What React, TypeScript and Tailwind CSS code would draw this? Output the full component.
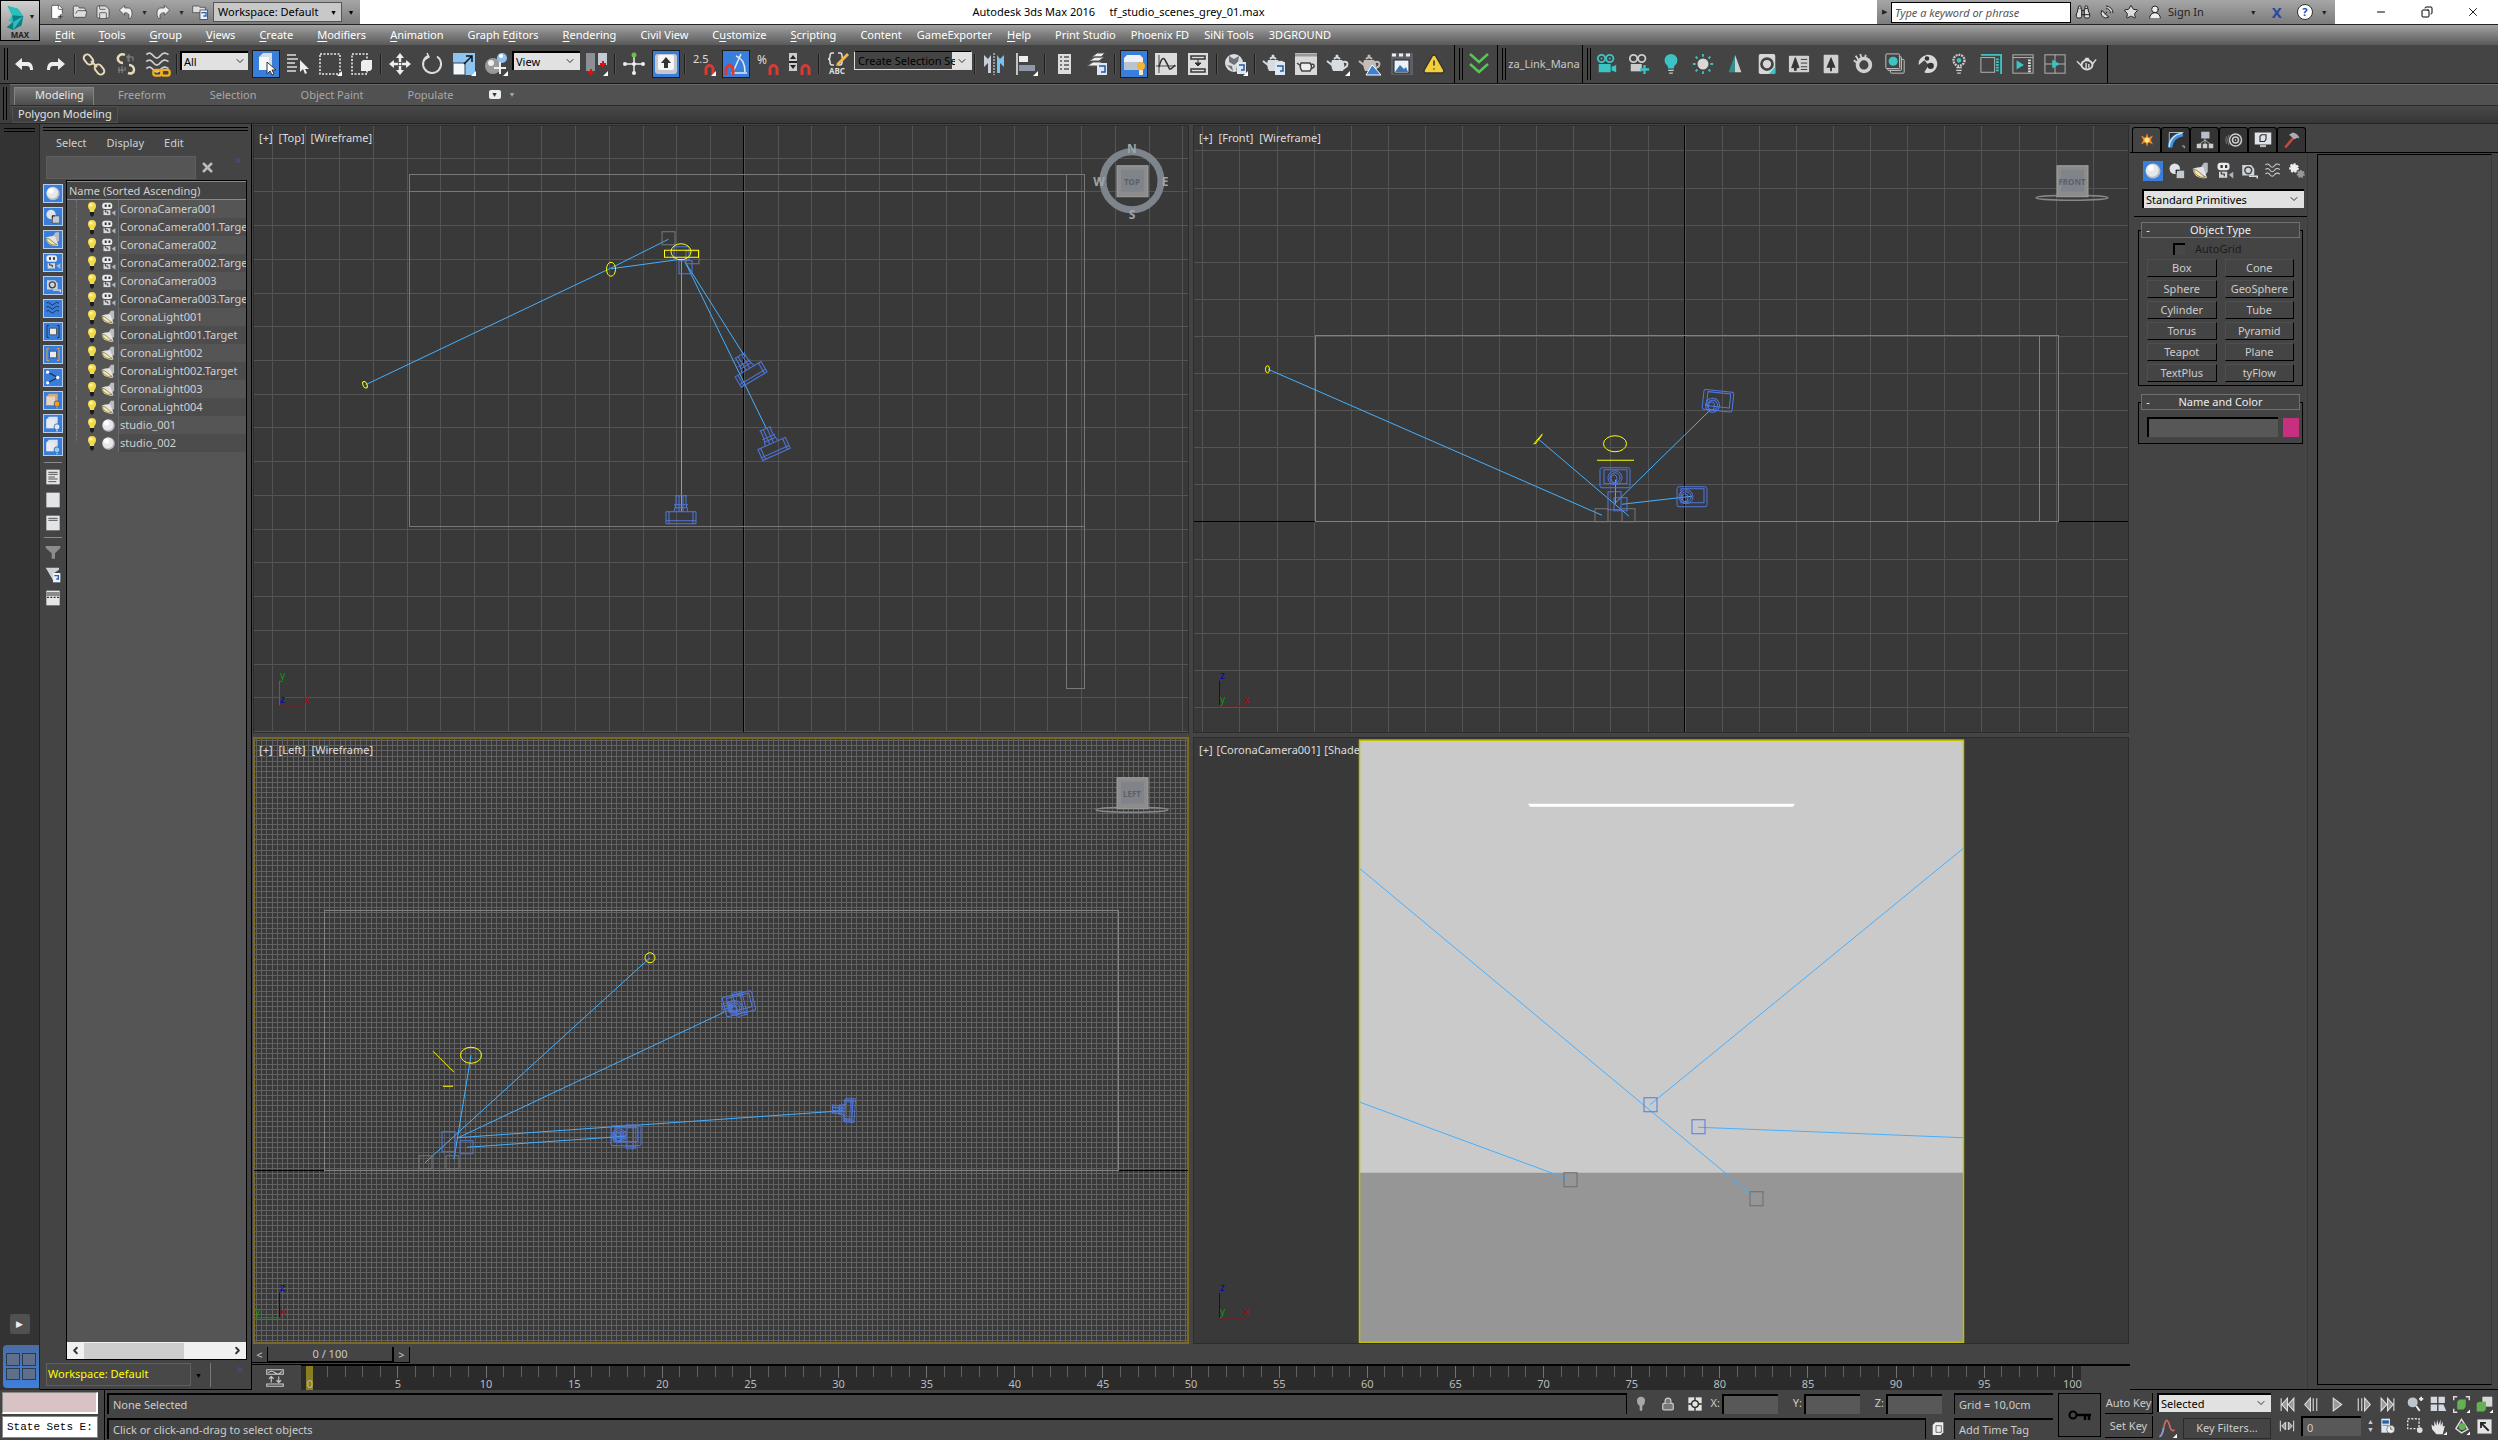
import type { ReactNode } from "react";
import {
  Binoculars,
  ChevronDown,
  ChevronLeft,
  ChevronRight,
  Copy,
  FilePlus2,
  FolderOpen,
  Lock,
  Minus,
  Save,
  SatelliteDish,
  Star,
  TriangleAlert,
  UserRound,
  X,
} from "lucide-react";

/* ---------- shared bits ---------- */

function Icon({ children, className = "h-6 w-6" }: { children: ReactNode; className?: string }) {
  return (
    <svg viewBox="0 0 24 24" fill="none" className={`shrink-0 ${className}`} aria-hidden="true">
      {children}
    </svg>
  );
}

function Select({ label, value, className }: { label: string; value: string; className: string }) {
  return (
    <div className={`relative shrink-0 ${className}`}>
      <select
        aria-label={label}
        defaultValue={value}
        className="block h-[19px] w-full appearance-none border-t-2 border-l-2 border-black bg-[#e1e1e1] pl-[2px] text-[11px] leading-[17px] text-black"
      >
        <option>{value}</option>
      </select>
      <ChevronDown className="pointer-events-none absolute top-1 right-1 h-3 w-3 text-[#333]" />
    </div>
  );
}

function Caret({ className = "" }: { className?: string }) {
  return <span className={`text-[7px] leading-none ${className}`}>▼</span>;
}

function Corner() {
  return <path d="M24 19v5h-5z" fill="#fff" />;
}

/* ---------- icons ---------- */

const UndoArrow = ({ flip = false }: { flip?: boolean }) => (
  <Icon className={flip ? "h-6 w-6 -scale-x-100" : "h-6 w-6"}>
    <path d="M3 12l7-6v4h5c4 0 6 2.500 6 8h-3c0-3-1-4-3-4h-5v4z" fill="#eee" />
  </Icon>
);

const LinkIcon = () => (
  <Icon>
    <g stroke="#e8d9b8" strokeWidth="2">
      <rect x="3" y="2" width="7" height="11" rx="3.500" transform="rotate(-40 6.500 7.500)" />
      <rect x="14" y="12" width="7" height="11" rx="3.500" transform="rotate(-40 17.500 17.500)" />
      <path d="M9 9l6 6" />
    </g>
  </Icon>
);

const UnlinkIcon = () => (
  <Icon>
    <path d="M11 3c-4-2-8 1-7 5 1 2 3 3 5 3M15 13c3 0 5 2 5 5s-3 4-6 3" stroke="#e8d9b8" strokeWidth="2.500" />
    <path d="M14 3v6m-2-4h7m-4-3v8m4-5v4M5 15v6m-1-3h6m-2-4v7m3-6v4" stroke="#8a8a8a" />
  </Icon>
);

const Waves = ({ color = "#ccc", chain = false }: { color?: string; chain?: boolean }) => (
  <Icon className="h-full w-full">
    <path d="M2 4q3-3 6 1t6 0 7-1M2 10q3-3 6 1t6 0 7-1M2 16q3-3 6 1t6 0 7-1" stroke={color} strokeWidth="1.500" />
    {chain && (
      <g stroke="#f0b020" strokeWidth="2">
        <rect x="8" y="17" width="7" height="5" rx="2" />
        <rect x="15" y="17" width="7" height="5" rx="2" />
      </g>
    )}
  </Icon>
);

const CubeCursor = () => (
  <Icon>
    <path d="M5 5l4-4h9v13l-3 4H5z" fill="#d5dce4" />
    <path d="M5 5h10v13H5z" fill="#f6f8fa" />
    <path d="M13 10v12l3-3 2 4 2-1-2-4h4z" fill="#fff" stroke="#333" />
  </Icon>
);

const ByName = () => (
  <Icon>
    <path d="M1 3h9M1 7h11M1 11h8M1 15h10M1 19h9" stroke="#ddd" strokeWidth="1.500" />
    <path d="M14 8v12l3-3 2 5 2-1-2-4h4z" fill="#eee" />
  </Icon>
);

const Marquee = ({ cube = false }: { cube?: boolean }) => (
  <Icon>
    <rect x="2" y="2" width={cube ? 15 : 20} height="20" stroke="#eee" strokeWidth="1.500" strokeDasharray="2 1.500" />
    {cube && <path d="M11 10l2-2h9v9l-2 2h-9z" fill="#eee" />}
    {!cube && <Corner />}
  </Icon>
);

const MoveIcon = () => (
  <Icon>
    <path d="M12 1l4 5H8zM12 23l4-5H8zM1 12l5-4v8zM23 12l-5-4v8z" fill="#eee" />
    <path d="M12 6v4m0 4v4M6 12h4m4 0h4" stroke="#eee" strokeWidth="2.500" />
    <circle cx="12" cy="12" r="1.500" fill="#eee" />
  </Icon>
);

const RotateIcon = () => (
  <Icon>
    <path d="M17 4.500A9 9 0 1 1 8 4" stroke="#ddd" strokeWidth="2" />
    <path d="M7 1l2 4-5 3" stroke="#ddd" strokeWidth="1.500" />
  </Icon>
);

const ScaleIcon = () => (
  <Icon>
    <rect x="1" y="1" width="22" height="22" fill="#8cc4f2" />
    <rect x="1" y="11" width="12" height="12" fill="#f4f7fa" stroke="#345" />
    <path d="M12 12l8-8m-6 0h6v6" stroke="#111" strokeWidth="1.500" />
    <Corner />
  </Icon>
);

const PlaceIcon = () => (
  <Icon>
    <circle cx="9" cy="14" r="8" fill="#999" />
    <circle cx="7" cy="11" r="3" fill="#eee" />
    <circle cx="18" cy="6" r="5" fill="#8fc4f2" />
    <circle cx="17" cy="4" r="2" fill="#fff" />
    <path d="M16 10v12M10 16h12" stroke="#eee" strokeWidth="2" />
    <Corner />
  </Icon>
);

const PivotIcon = () => (
  <Icon>
    <rect x="2" y="1" width="9" height="18" fill="#8c8f94" />
    <rect x="14" y="1" width="9" height="12" fill="#c5cbd2" />
    <path d="M4 20h6M7 17v6M16 12h6M19 9v6" stroke="#e01010" strokeWidth="2" />
    <Corner />
  </Icon>
);

const ManipulateIcon = () => (
  <Icon>
    <path d="M12 4v17M3 12h18" stroke="#eee" strokeWidth="1.500" />
    <circle cx="12" cy="3" r="2.500" fill="#6abf4b" />
    <circle cx="3" cy="12" r="2" fill="#eee" />
    <circle cx="21" cy="12" r="2" fill="#eee" />
    <circle cx="12" cy="21" r="2" fill="#eee" />
    <circle cx="12" cy="12" r="2" fill="#eee" />
  </Icon>
);

const KeyboardIcon = () => (
  <Icon>
    <rect x="1" y="2" width="22" height="20" rx="3" fill="#c4c7cc" />
    <rect x="4" y="3" width="16" height="15" rx="2" fill="#f5f5f5" />
    <path d="M12 5l5 6h-3v5h-4v-5H7z" fill="#333" />
  </Icon>
);

const Magnet = ({ x = 13 }: { x?: number }) => (
  <path d={`M${x} 23v-6a3.500 3.500 0 0 1 7 0v6`} stroke="#d83a34" strokeWidth="3" />
);

const SnapIcon = ({ kind }: { kind: "2.5" | "angle" | "%" | "spin" }) => (
  <Icon>
    {kind === "2.5" && <text x="1" y="11" fontSize="11" fill="#ddd">2.5</text>}
    {kind === "%" && <text x="1" y="12" fontSize="12" fill="#ddd">%</text>}
    {kind === "angle" && <path d="M9 20L17 2M7 21h16M12 4q9 3 9 16" stroke="#dfeaf6" strokeWidth="1.500" />}
    {kind === "spin" && (
      <>
        <rect x="1" y="1" width="8" height="18" fill="#ccc" />
        <path d="M5 3l3 4H2zM5 17l3-4H2z" fill="#222" />
        <path d="M1 10h8" stroke="#222" strokeWidth="2" />
      </>
    )}
    <Magnet x={kind === "angle" ? 2 : 14} />
    {kind === "2.5" && <Corner />}
  </Icon>
);

const NamedSetIcon = () => (
  <Icon>
    <path d="M8 1H6q-2 0-2 3t-2 3q2 0 2 3t2 3h2M12 1h2q2 0 2 3t2 3q-2 0-2 3t-2 3h-2" stroke="#ddd" strokeWidth="1.500" />
    <path d="M11 11l10-10 2 2-10 10-3 1z" fill="#f0b94a" />
    <text x="3" y="22" fontSize="8" fontWeight="bold" fill="#ddd">ABC</text>
  </Icon>
);

const MirrorIcon = () => (
  <Icon>
    <path d="M2 3l4 4 3-4v18H6V11L2 15z" fill="#c9ced6" />
    <path d="M22 3l-4 4-3-4v18h3V11l4 4z" fill="#7cc0ee" />
    <path d="M12 1v22" stroke="#eee" strokeDasharray="2 1" />
  </Icon>
);

const AlignIcon = () => (
  <Icon>
    <path d="M3 1v22" stroke="#eee" strokeWidth="1.500" />
    <rect x="5" y="4" width="9" height="6" fill="#eee" />
    <rect x="5" y="13" width="16" height="6" fill="#8f98a6" />
    <Corner />
  </Icon>
);

const ListIcon = () => (
  <Icon>
    <rect x="6" y="2" width="13" height="20" fill="#ddd" />
    <path d="M8 5h2m2 0h5M8 9h2m2 0h5M8 13h2m2 0h5M8 17h2m2 0h5" stroke="#555" strokeWidth="1.500" />
  </Icon>
);

const LayersIcon = () => (
  <Icon>
    <path d="M3 14l6-4h9l-5 4zM5 9l6-4h9l-5 4zM8 5l5-4h8l-4 4z" fill="#eee" stroke="#555" />
    <rect x="13" y="11" width="10" height="12" fill="#dce7f3" />
    <path d="M15 14h6v6h-4" stroke="#245a9c" strokeWidth="1.500" />
  </Icon>
);

const ExplorerIcon = () => (
  <Icon>
    <path d="M2 6l3-3h13l3 3v4H2z" fill="#eef2f6" />
    <rect x="2" y="10" width="19" height="8" fill="#b9c4d0" />
    <circle cx="19" cy="14" r="4" fill="#f7b32b" />
    <rect x="17" y="18" width="4" height="5" fill="#f0e6c8" />
  </Icon>
);

const CurveIcon = () => (
  <Icon>
    <rect x="1" y="1" width="22" height="22" fill="#dcdcdc" />
    <path d="M5 3v18M2 14h20" stroke="#444" />
    <path d="M5 15q3-12 6-7t4 8 6-3" stroke="#333" strokeWidth="1.500" />
  </Icon>
);

const SchematicIcon = () => (
  <Icon>
    <rect x="2" y="1" width="20" height="22" fill="#dcdcdc" />
    <path d="M5 4h14v3H5zM5 17h14v3H5z" stroke="#333" strokeWidth="1.500" />
    <path d="M12 7v7m-3-3l3 3 3-3z" fill="#333" stroke="#333" />
  </Icon>
);

const MaterialIcon = () => (
  <Icon>
    <circle cx="10" cy="11" r="9" fill="#d9dde2" />
    <path d="M5 4l5 3 5-3-1 6-4 3-5-3zM3 13l5 1 1 5M17 13l-4 1-1 5" fill="#6d7278" />
    <rect x="13" y="10" width="9" height="12" fill="#dce7f3" />
    <path d="M15 13h5v5h-3" stroke="#245a9c" strokeWidth="1.500" />
    <Corner />
  </Icon>
);

const Teapot = ({ color = "#d8dce0", extra }: { color?: string; extra?: ReactNode }) => (
  <Icon>
    <path d="M6 8h10q4 4 1 11H7Q4 13 6 8z" fill={color} />
    <path d="M6 13L1 9M17 10q6-1 4 4l-4 3M8 7q3-3 6 0" stroke={color} strokeWidth="2" />
    <circle cx="11" cy="4" r="1.500" fill={color} />
    {extra}
  </Icon>
);

const FrameTeapot = () => (
  <Icon>
    <rect x="1" y="1" width="22" height="22" fill="#d9d9d9" />
    <path d="M1 3h22" stroke="#999" strokeWidth="3" />
    <path d="M7 11h9q3 4 0 8H8q-3-4-1-8zM7 14l-4-3M17 12q4 0 3 3l-3 2" fill="#eee" stroke="#444" strokeWidth="1.500" />
  </Icon>
);

const FilmIcon = () => (
  <Icon>
    <rect x="1" y="1" width="22" height="22" fill="#5c6066" />
    <path d="M2 3h4m3 0h4m3 0h4" stroke="#eee" strokeWidth="3" />
    <rect x="4" y="8" width="15" height="13" fill="#eaf2fa" stroke="#222" />
    <path d="M5 20l5-7 4 4 2-2 2 5z" fill="#3c74b4" />
  </Icon>
);

const ChevronsGreen = () => (
  <Icon>
    <path d="M3 2l9 8 9-8M3 12l9 8 9-8" stroke="#56c456" strokeWidth="2.500" />
  </Icon>
);

const TEAL = "#3cc4c4";

/* renderer plugin toolbar */
const coronaIcons: { name: string; art: ReactNode }[] = [
  { name: "Camera", art: <><circle cx="6" cy="6" r="4" stroke={TEAL} strokeWidth="2" /><circle cx="15" cy="6" r="4" stroke={TEAL} strokeWidth="2" /><circle cx="6" cy="6" r="1" fill={TEAL} /><circle cx="15" cy="6" r="1" fill={TEAL} /><rect x="3" y="12" width="13" height="9" fill={TEAL} /><path d="M17 15l5-2v8l-5-2z" fill={TEAL} /></> },
  { name: "Add camera", art: <><circle cx="6" cy="6" r="4" stroke="#ccc" strokeWidth="2" /><circle cx="15" cy="6" r="4" stroke="#ccc" strokeWidth="2" /><rect x="3" y="12" width="12" height="8" fill="#ccc" /><path d="M18 13v10M13 18h10" stroke={TEAL} strokeWidth="2.500" /></> },
  { name: "Light", art: <><circle cx="12" cy="8" r="7" fill={TEAL} /><path d="M8 13h8l-1 4H9z" fill={TEAL} /><path d="M9 19h6m-5 3h4" stroke="#ccc" strokeWidth="1.500" /></> },
  { name: "Sun", art: <><circle cx="12" cy="12" r="6" fill="#d8d8d8" /><path d="M12 1v3m0 16v3M1 12h3m16 0h3M4 4l2 2m12 12l2 2M20 4l-2 2M6 18l-2 2" stroke={TEAL} strokeWidth="2" /></> },
  { name: "Proxy", art: <><path d="M12 2L5 21h7z" fill="#2f8f8f" /><path d="M12 2l7 19h-7z" fill="#d0d0d0" /></> },
  { name: "Material library", art: <><rect x="3" y="1" width="18" height="22" rx="2" fill="#d8d8d8" /><circle cx="12" cy="12" r="6" stroke="#444" strokeWidth="3" /><path d="M14 23l7-8v8z" fill={TEAL} /></> },
  { name: "Scatter list", art: <><rect x="1" y="3" width="22" height="18" rx="1" fill="#d0d0d0" /><path d="M8 5l-4 11h3v3h2v-3h3zM14 7h7m-7 4h7m-7 4h7m-7 3h7" fill="#333" stroke="#333" /></> },
  { name: "Scatter", art: <><rect x="4" y="2" width="16" height="20" rx="1" fill="#d0d0d0" /><path d="M12 4L7 16h4v4h2v-4h4z" fill="#333" /></> },
  { name: "Hair", art: <><circle cx="13" cy="13" r="7" stroke="#d0d0d0" strokeWidth="4" /><path d="M4 3l4 6M9 1l2 6M15 2l-1 4M2 8l5 4" stroke="#d0d0d0" strokeWidth="2" /></> },
  { name: "Frame buffer", art: <><rect x="7" y="7" width="15" height="15" rx="1" stroke="#ccc" /><rect x="4" y="4" width="15" height="15" rx="1" fill="#555" stroke="#ccc" /><rect x="2" y="1" width="15" height="16" rx="1" fill="#444" stroke="#ccc" /><circle cx="10" cy="9" r="5" fill={TEAL} /></> },
  { name: "Light mix", art: <><path d="M12 2a10 10 0 1 1-3 19l5-8-5-5-6 5Q2 5 12 2z" fill="#d8d8d8" /><circle cx="12" cy="6" r="2.500" fill="#333" /><circle cx="16" cy="14" r="3.500" fill="#333" /></> },
  { name: "Light lister", art: <><circle cx="12" cy="8" r="6" stroke="#ccc" strokeWidth="2.500" strokeDasharray="2 1" /><circle cx="12" cy="8" r="2.500" fill={TEAL} /><path d="M9 16h6m-6 3h6m-5 3h4" stroke="#ccc" strokeWidth="1.500" /></> },
  { name: "Virtual frame buffer", art: <><path d="M1 2h22v21" stroke={TEAL} strokeWidth="2" /><rect x="1" y="5" width="15" height="16" stroke="#bbb" /><path d="M19 6v15" stroke={TEAL} strokeWidth="3" strokeDasharray="2 1" /></> },
  { name: "Interactive render", art: <><rect x="1" y="2" width="22" height="20" stroke="#bbb" /><path d="M1 5h22" stroke="#bbb" /><path d="M5 8l8 5-8 5z" fill={TEAL} /><path d="M19 7v14" stroke="#ddd" strokeWidth="3" strokeDasharray="2 1" /></> },
  { name: "Dock render", art: <><rect x="1" y="2" width="22" height="20" stroke="#bbb" /><path d="M12 2v20M1 12h22" stroke="#bbb" /><path d="M9 7l8 5-8 5z" fill={TEAL} /></> },
  { name: "Render", art: <><ellipse cx="12" cy="13" rx="6" ry="5" stroke="#ddd" strokeWidth="2" /><path d="M6 14L1 9M18 12l4-5M9 8q3-2 6 0M10 6h4M11 11v6m3-5v4" stroke="#ddd" strokeWidth="1.500" /></> },
];

const Sphere = () => (
  <Icon className="h-full w-full">
    <circle cx="12" cy="12" r="10" fill="#b9bcc2" />
    <circle cx="11" cy="11" r="8.500" fill="#e6e8ec" />
    <circle cx="9" cy="8" r="4" fill="#fff" />
  </Icon>
);

const Shapes = () => (
  <Icon className="h-full w-full">
    <circle cx="9" cy="9" r="7" fill="#dfe3e8" />
    <path d="M11 11h11v11H11z" fill="#c2cad4" stroke="#444" />
    <path d="M11 15v-4h4" stroke="#222" strokeWidth="1.500" />
  </Icon>
);

const Lamp = () => (
  <Icon className="h-full w-full">
    <path d="M16 1h5v12l-3 4-7-9z" fill="#b9bcc0" />
    <path d="M1 9q8-3 14-2l5 14q-6 2-12-1T1 9z" fill="#e4e4e4" />
    <path d="M2 10q4 0 8 4t8 6q-6 2-11-2T2 10z" fill="#f7eaa0" stroke="#6b5f33" />
  </Icon>
);

const CameraSmall = () => (
  <Icon className="h-full w-full">
    <rect x="2" y="1" width="16" height="10" rx="4" fill="#e8eaed" />
    <path d="M6 4h3v4H6zM12 4h3v4h-3z" fill="#333" />
    <rect x="4" y="13" width="11" height="8" fill="#d4d8dd" />
    <path d="M17 17l6-4v9z" fill="#aeb5bf" />
    <path d="M7 13v3h4v3" stroke="#333" strokeWidth="1.500" />
  </Icon>
);

const Tape = () => (
  <Icon className="h-full w-full">
    <path d="M3 4h12l4 5v9H3z" fill="#cfd4da" />
    <circle cx="11" cy="11" r="4.500" stroke="#444" strokeWidth="2" />
    <path d="M12 19h11v3" stroke="#ddd" strokeWidth="2" />
  </Icon>
);

const Gears = () => (
  <Icon className="h-full w-full">
    <circle cx="8" cy="8" r="5" fill="#eee" stroke="#eee" strokeWidth="3" strokeDasharray="2.500 2" />
    <circle cx="17" cy="16" r="4" fill="#999" stroke="#999" strokeWidth="3" strokeDasharray="2 1.500" />
  </Icon>
);

const Bulb = () => (
  <svg viewBox="0 0 10 16" className="h-4 w-[10px] shrink-0" aria-hidden="true">
    <path d="M1 5a4 4 0 0 1 8 0c0 3-2 3-2 6H3C3 8 1 8 1 5z" fill="#f2dc4a" />
    <circle cx="4" cy="4" r="1.500" fill="#fff6b8" />
    <path d="M3 11h4v3L5 16l-2-2z" fill="#1c1c1c" />
  </svg>
);

const Bracketed = ({ color }: { color: string }) => (
  <Icon className="h-full w-full">
    <path d="M6 3H3v18h3M18 3h3v18h-3" stroke={color} strokeWidth="1.500" />
    <rect x="7" y="7" width="10" height="10" fill="#e8eaee" stroke="#333" />
  </Icon>
);

const BoxWith = ({ color, top }: { color: string; top: string }) => (
  <Icon className="h-full w-full">
    <path d="M2 6l4-4h13v13l-3 4H2z" fill={top} />
    <path d="M2 6h13v13H2z" fill="#eef1f5" fillOpacity="0.600" />
    <circle cx="18" cy="17" r="4.500" fill={color} stroke="#1d4a80" />
    <path d="M18 21v3" stroke={color} strokeWidth="2" />
  </Icon>
);

/* ---------- title bar + menus ---------- */

const mainMenus = ["Edit", "Tools", "Group", "Views", "Create", "Modifiers", "Animation", "Graph Editors", "Rendering", "Civil View", "Customize", "Scripting"];
const helpMenus = ["Content", "GameExporter", "Help"];
const pluginMenus = ["Print Studio", "Phoenix FD", "SiNi Tools", "3DGROUND"];

// index of the underlined accelerator letter
const accel: Record<string, number> = { Edit: 0, Tools: 0, Group: 0, Views: 0, Create: 0, Modifiers: 0, Animation: 0, "Graph Editors": 7, Rendering: 0, Customize: 1, Scripting: 0, Help: 0 };

function MenuButton({ name }: { name: string }) {
  const i = accel[name];
  return (
    <button className="whitespace-nowrap">
      {i === undefined ? name : <>{name.slice(0, i)}<u className="underline-offset-2">{name[i]}</u>{name.slice(i + 1)}</>}
    </button>
  );
}

function Header() {
  return (
    <header className="flex h-[45px] bg-[#606060]">
      <button aria-label="Application menu" className="flex h-[41px] w-10 shrink-0 flex-col items-center border border-black bg-gradient-to-b from-[#d0d0d0] to-[#8c8c8c]">
        <span className="flex items-center">
          <svg viewBox="0 0 20 28" className="mt-1 h-[26px] w-5" aria-hidden="true">
            <path d="M2 1l11 3 6 8-5 5-7-6z" fill="#1aa8a8" />
            <path d="M2 1l5 10-4 6 8 4 8-9-6-8z" fill="#27c0bd" />
            <path d="M7 11l12 1-2 10-9 5-7-3 7-6z" fill="#0b7f86" />
            <path d="M8 18l11-6-6 8-5 7z" fill="#35b9b9" />
          </svg>
          <Caret className="ml-1 text-[#222]" />
        </span>
        <span className="text-[8px] leading-2 font-bold text-[#222]">MAX</span>
      </button>
      <div className="flex min-w-0 flex-1 flex-col">
        <div className="flex h-6 bg-white text-[11px] text-black">
          <div className="flex w-[320px] shrink-0 items-center bg-gradient-to-b from-[#a6a6a6] to-[#7c7c7c]">
            <div className="flex flex-1 items-center justify-between pr-[5px] pl-[9px] text-[#2a2a2a]">
              <button aria-label="New"><FilePlus2 className="h-4 w-4 fill-white" strokeWidth={1} /></button>
              <button aria-label="Open"><FolderOpen className="h-4 w-4 fill-[#ddd]" strokeWidth={1} /></button>
              <button aria-label="Save"><Save className="h-4 w-4 fill-[#ddd]" strokeWidth={1} /></button>
              <button aria-label="Undo">
                <Icon className="h-4 w-4"><path d="M2 9l8-7v4h5q6 0 6 8t-5 8q3-9-6-9v4z" fill="#eee" stroke="#333" /></Icon>
              </button>
              <Caret />
              <button aria-label="Redo">
                <Icon className="h-4 w-4 -scale-x-100"><path d="M2 9l8-7v4h5q6 0 6 8t-5 8q3-9-6-9v4z" fill="#eee" stroke="#333" /></Icon>
              </button>
              <Caret />
              <button aria-label="Project folder">
                <Icon className="h-4 w-4"><path d="M1 3h9l2 2h8v8H1z" fill="#ddd" stroke="#333" /><rect x="12" y="9" width="11" height="14" fill="#eef" stroke="#333" /><path d="M14 13h7v5h-4" stroke="#2a62a8" strokeWidth="2" /></Icon>
              </button>
            </div>
            <button className="flex h-5 w-[129px] items-center justify-between border border-[#555] bg-[#c8c8c8] px-1 text-[11px]">
              Workspace: Default <Caret className="text-[5px]" />
            </button>
            <button aria-label="Customize toolbar" className="flex h-full w-[18px] items-center justify-center"><Caret /></button>
          </div>
          <h1 className="flex-1 pt-1 text-center text-[11px] leading-4 whitespace-pre">Autodesk 3ds Max 2016     tf_studio_scenes_grey_01.max</h1>
          <div className="flex w-[458px] shrink-0 items-center bg-gradient-to-b from-[#a6a6a6] to-[#7c7c7c] text-[#222]">
            <span className="w-[14px] text-center text-[7px]">▶</span>
            <input aria-label="Search" placeholder="Type a keyword or phrase" className="h-[21px] w-[180px] border border-black bg-white px-[3px] text-[11px] italic placeholder:text-[#555]" />
            <div className="flex flex-1 items-center">
              <button aria-label="Find" className="flex w-6 justify-center"><Binoculars className="h-4 w-4 fill-[#ddd]" strokeWidth={1.5} /></button>
              <button aria-label="Communication center" className="flex w-6 justify-center"><SatelliteDish className="h-4 w-4 fill-[#ddd]" strokeWidth={1.5} /></button>
              <button aria-label="Favorites" className="flex w-6 justify-center"><Star className="h-4 w-4 fill-[#ddd]" strokeWidth={1.5} /></button>
              <button className="flex items-center gap-[5px] pl-1 text-[11px]"><UserRound className="h-4 w-4 fill-[#eee]" strokeWidth={1.5} />Sign In</button>
              <Caret className="ml-[46px] text-[5px]" />
              <button aria-label="Exchange apps" className="ml-2 w-6 text-[15px] leading-4 font-bold text-[#2a49a0]">X</button>
              <button aria-label="Help" className="ml-2 h-4 w-4 rounded-full border border-[#333] bg-white text-[11px] leading-[14px] font-bold text-[#1f4fb0]">?</button>
              <Caret className="ml-2 text-[5px]" />
            </div>
          </div>
          <div className="flex w-[163px] shrink-0 items-center justify-end pr-[2px]">
            <button aria-label="Minimize" className="flex w-[46px] justify-center"><Minus className="h-3 w-3" strokeWidth={2} /></button>
            <button aria-label="Restore" className="flex w-[46px] justify-center"><Copy className="h-3 w-3 -scale-x-100" strokeWidth={2} /></button>
            <button aria-label="Close" className="flex w-[46px] justify-center"><X className="h-[14px] w-[14px]" strokeWidth={1.5} /></button>
          </div>
        </div>
        <nav className="flex h-[21px] items-center gap-6 border-t border-[#222] bg-gradient-to-b from-[#a2a2a2] to-[#5a5a5a] pl-[15px] text-[11px] text-white">
          <div className="flex gap-6">{mainMenus.map((m) => <MenuButton key={m} name={m} />)}</div>
          <div className="flex gap-[15px]">{helpMenus.map((m) => <MenuButton key={m} name={m} />)}</div>
          <div className="flex gap-[15px]">{pluginMenus.map((m) => <MenuButton key={m} name={m} />)}</div>
        </nav>
      </div>
    </header>
  );
}

/* ---------- main toolbar ---------- */

function Tool({ name, active = false, children }: { name: string; active?: boolean; children: ReactNode }) {
  return (
    <button aria-label={name} className="flex w-8 shrink-0 justify-center">
      <span className={active ? "flex h-7 w-7 items-center justify-center border border-[#1c1c1c] bg-[#3a7edb]" : "flex h-7 w-7 items-center justify-center"}>{children}</span>
    </button>
  );
}

const Sep = () => <span className="mx-[2px] h-5 w-[2px] shrink-0 border-r border-[#555] bg-[#1e1e1e]" />;

const Grip = () => <span className="ml-1 h-8 w-1 shrink-0 border-x border-black" />;

const settings = <><rect x="13" y="10" width="10" height="13" fill="#dce7f3" /><path d="M15 14h6v5h-3" stroke="#245a9c" strokeWidth="1.500" /></>;

function Toolbar() {
  return (
    <div className="flex h-[39px] border-b border-[#161616] bg-[#444]">
      <div className="flex items-center border-r border-black pr-1">
        <Grip />
        <Tool name="Undo"><UndoArrow /></Tool>
        <Tool name="Redo"><UndoArrow flip /></Tool>
        <Sep />
        <Tool name="Select and link"><LinkIcon /></Tool>
        <Tool name="Unlink"><UnlinkIcon /></Tool>
        <Tool name="Bind to space warp"><Waves chain /></Tool>
        <Sep />
        <Select label="Selection filter" value="All" className="mb-2 w-[70px] pr-[2px]" />
        <Tool name="Select object" active><CubeCursor /></Tool>
        <Tool name="Select by name"><ByName /></Tool>
        <Tool name="Selection region"><Marquee /></Tool>
        <Tool name="Window crossing"><Marquee cube /></Tool>
        <Sep />
        <Tool name="Move"><MoveIcon /></Tool>
        <Tool name="Rotate"><RotateIcon /></Tool>
        <Tool name="Scale"><ScaleIcon /></Tool>
        <Tool name="Place"><PlaceIcon /></Tool>
        <Select label="Coordinate system" value="View" className="mb-2 w-[68px]" />
        <Tool name="Pivot center"><PivotIcon /></Tool>
        <Sep />
        <Tool name="Manipulate"><ManipulateIcon /></Tool>
        <Tool name="Keyboard override" active><KeyboardIcon /></Tool>
        <Sep />
        <Tool name="Snaps"><SnapIcon kind="2.5" /></Tool>
        <Tool name="Angle snap" active><SnapIcon kind="angle" /></Tool>
        <Tool name="Percent snap"><SnapIcon kind="%" /></Tool>
        <Tool name="Spinner snap"><SnapIcon kind="spin" /></Tool>
        <Sep />
        <Tool name="Named selection sets"><NamedSetIcon /></Tool>
        <div className="relative mb-2 w-[118px] shrink-0">
          <select aria-label="Selection set" className="block h-[19px] w-full appearance-none border border-[#ddd] border-t-black bg-[linear-gradient(90deg,#444_97px,#e1e1e1_97px)] pr-4 pl-[3px] text-[11px] leading-[17px] text-black">
            <option>Create Selection Se</option>
          </select>
          <ChevronDown className="pointer-events-none absolute top-1 right-1 h-3 w-3 text-[#333]" />
        </div>
        <Sep />
        <Tool name="Mirror"><MirrorIcon /></Tool>
        <Tool name="Align"><AlignIcon /></Tool>
        <Sep />
        <Tool name="Scene explorer"><ListIcon /></Tool>
        <Tool name="Layer explorer"><LayersIcon /></Tool>
        <Sep />
        <Tool name="Ribbon" active><ExplorerIcon /></Tool>
        <Tool name="Curve editor"><CurveIcon /></Tool>
        <Tool name="Schematic view"><SchematicIcon /></Tool>
        <Sep />
        <Tool name="Material editor"><MaterialIcon /></Tool>
        <Sep />
        <Tool name="Render setup"><Teapot extra={settings} /></Tool>
        <Tool name="Rendered frame"><FrameTeapot /></Tool>
        <Tool name="Render production"><Teapot extra={<Corner />} /></Tool>
        <Tool name="Render in cloud"><Teapot color="#c4bdb6" extra={<path d="M8 23l6-10 3 3 6 7z" fill="#3f7fd0" stroke="#fff" />} /></Tool>
        <Tool name="Gallery"><FilmIcon /></Tool>
        <Tool name="Warning"><TriangleAlert className="h-6 w-6 fill-[#f4cf3a] text-[#333]" strokeWidth={1.5} /></Tool>
      </div>
      <div className="flex items-center border-r border-black pr-[2px]"><Grip /><Tool name="Expand"><ChevronsGreen /></Tool></div>
      <div className="flex items-center border-r border-black">
        <Grip />
        <button className="w-[76px] text-center text-[11px] text-[#c8c8c8]">za_Link_Mana</button>
      </div>
      <div className="flex items-center border-r border-black pr-1">
        <Grip />
        {coronaIcons.map((c) => (
          <Tool key={c.name} name={c.name}><Icon className="h-[22px] w-[22px]">{c.art}</Icon></Tool>
        ))}
      </div>
    </div>
  );
}

function Ribbon() {
  return (
    <div className="flex h-10 border-b border-[#222] bg-[#3d3d3d] text-[11px]">
      <span className="m-[3px] w-1 border-x border-black" />
      <div className="min-w-0 flex-1">
        <div className="flex h-[21px] items-end border-t border-[#6a6a6a] bg-[#515151] pl-1 text-[#a8a8a8]">
          <button className="flex h-[18px] w-20 border border-b-0 border-[#838383] bg-gradient-to-b from-[#777] to-[#4d4d4d] pl-5 leading-[14px] text-[#e6e6e6]">Modeling</button>
          <div className="flex h-5 gap-11 pl-6 leading-[18px]">
            <button>Freeform</button>
            <button>Selection</button>
            <button>Object Paint</button>
            <button>Populate</button>
          </div>
          <button aria-label="Minimize ribbon" className="mb-[6px] ml-[35px] flex items-center gap-2">
            <span className="flex h-[9px] w-3 items-center justify-center rounded-[2px] bg-[#eee] text-[#333]"><Caret className="text-[6px]" /></span>
            <Caret className="text-[5px]" />
          </button>
        </div>
        <div className="h-[18px] border-t border-[#2a2a2a] bg-gradient-to-b from-[#484848] to-[#373737]">
          <button className="ml-[2px] flex h-[17px] border border-[#505050] bg-[#404040] px-[5px] leading-[14px] text-[#e0e0e0]">Polygon Modeling</button>
        </div>
      </div>
    </div>
  );
}

/* ---------- scene explorer ---------- */

type Kind = "camera" | "light" | "geometry";

const sceneNodes: { name: string; kind: Kind }[] = [
  { name: "CoronaCamera001", kind: "camera" },
  { name: "CoronaCamera001.Target", kind: "camera" },
  { name: "CoronaCamera002", kind: "camera" },
  { name: "CoronaCamera002.Target", kind: "camera" },
  { name: "CoronaCamera003", kind: "camera" },
  { name: "CoronaCamera003.Target", kind: "camera" },
  { name: "CoronaLight001", kind: "light" },
  { name: "CoronaLight001.Target", kind: "light" },
  { name: "CoronaLight002", kind: "light" },
  { name: "CoronaLight002.Target", kind: "light" },
  { name: "CoronaLight003", kind: "light" },
  { name: "CoronaLight004", kind: "light" },
  { name: "studio_001", kind: "geometry" },
  { name: "studio_002", kind: "geometry" },
];

const filters: { name: string; art: ReactNode }[] = [
  { name: "Geometry", art: <Sphere /> },
  { name: "Shapes", art: <Shapes /> },
  { name: "Lights", art: <Lamp /> },
  { name: "Cameras", art: <CameraSmall /> },
  { name: "Helpers", art: <Tape /> },
  { name: "Space warps", art: <Waves color="#1c3557" /> },
  { name: "Groups", art: <Bracketed color="#1c3557" /> },
  { name: "XRefs", art: <Bracketed color="#e0a040" /> },
  { name: "Bones", art: <Icon className="h-full w-full"><path d="M4 4l15 8-15 8" stroke="#1c3557" strokeWidth="2" /><circle cx="4" cy="4" r="2.500" fill="#fff" /><circle cx="19" cy="12" r="2.500" fill="#fff" /><circle cx="4" cy="20" r="2.500" fill="#fff" /></Icon> },
  { name: "Containers", art: <BoxWith color="#f39a1f" top="#d9a878" /> },
  { name: "Frozen", art: <BoxWith color="#cfeaff" top="#dfe4ea" /> },
  { name: "Hidden", art: <BoxWith color="#8fc9f5" top="#dfe4ea" /> },
];

function Page({ lines }: { lines: number }) {
  return (
    <Icon className="h-4 w-4">
      <rect x="2" y="1" width="20" height="22" fill="#e2e4e7" />
      {lines > 0 && <path d="M5 5h14M5 8h14" stroke="#555" strokeWidth="1.500" />}
      {lines > 2 && <path d="M5 12h10M5 15h14M5 19h12" stroke="#555" strokeWidth="1.500" />}
    </Icon>
  );
}

function SceneExplorer() {
  return (
    <aside className="flex w-[212px] shrink-0 flex-col border-r border-b border-black bg-[#444] text-[11px] text-[#d0d0d0]">
      <div className="mx-[3px] mt-[3px] h-1 border-y border-black" />
      <div className="flex h-6 items-center gap-5 pl-4">
        <button>Select</button>
        <button>Display</button>
        <button>Edit</button>
      </div>
      <div className="flex h-6 items-center pl-[6px]">
        <input aria-label="Find object" className="h-[23px] w-[150px] border border-[#5e5e5e] bg-[#555]" />
        <button aria-label="Clear search" className="ml-1"><X className="h-[15px] w-[15px] text-[#bbb]" strokeWidth={4} /></button>
        <span className="ml-5 self-start text-[12px] leading-[10px] text-[#4b4b95]">»</span>
      </div>
      <div className="flex min-h-0 flex-1 pt-px">
        <div className="flex w-[26px] flex-col items-center gap-1 pt-1">
          {filters.map((f) => (
            <button key={f.name} aria-label={f.name} className="h-[19px] w-5 border border-[#b5cdea] bg-[#3a7edb] px-px">{f.art}</button>
          ))}
          <span className="my-[2px] h-px w-[18px] bg-[#8a8a8a]" />
          <div className="flex flex-col gap-[7px]">
            <Page lines={4} />
            <Page lines={0} />
            <Page lines={2} />
          </div>
          <span className="my-[2px] h-px w-[18px] bg-[#8a8a8a]" />
          <div className="flex flex-col gap-[7px]">
            <Icon className="h-4 w-4"><path d="M1 3h22v3l-8 8v8h-5v-8L1 6z" fill="#8d8d8d" /></Icon>
            <Icon className="h-4 w-4"><path d="M1 1h20v3l-9 6v10L4 6z" fill="#cdd2d8" /><rect x="12" y="9" width="11" height="14" fill="#eef" /><path d="M14 13h6v5h-3" stroke="#2a62a8" strokeWidth="2" /></Icon>
            <Icon className="h-4 w-4"><rect x="2" y="1" width="20" height="22" fill="#e6e6e6" /><path d="M2 3h20v6H2z" fill="#8a8a8a" /><path d="M3 11h18" stroke="#333" strokeWidth="2" strokeDasharray="3 2" /></Icon>
          </div>
        </div>
        <div className="mr-1 flex min-w-0 flex-1 flex-col border border-black bg-[#555]">
          <div className="h-[19px] border-y border-[#8a8a8a] bg-[#444] pl-[2px] leading-[17px] whitespace-nowrap">Name (Sorted Ascending)</div>
          <ul className="flex-1 overflow-hidden">
            {sceneNodes.map((n) => (
              <li key={n.name} className="group flex h-[18px] items-center">
                <span className="ml-[9px] h-full w-[9px] border-l border-dotted border-[#777] group-last:h-2 group-last:self-start" />
                <span className="ml-[2px]"><Bulb /></span>
                <span className="ml-1 h-[15px] w-[15px]">
                  {n.kind === "camera" ? <CameraSmall /> : n.kind === "light" ? <Lamp /> : <Sphere />}
                </span>
                <span className="ml-[2px] h-[18px] min-w-0 flex-1 overflow-hidden border-l border-[#6a6a6a] pl-px leading-[18px] whitespace-nowrap group-even:bg-[#4c4c4c]">{n.name}</span>
              </li>
            ))}
          </ul>
          <div className="flex h-[17px] items-center bg-[#f0f0f0] text-[#333]">
            <button aria-label="Scroll left" className="flex w-[17px] justify-center"><ChevronLeft className="h-[11px] w-[11px]" strokeWidth={4} /></button>
            <div className="flex h-4 flex-1"><div className="w-[100px] bg-[#cdcdcd]" /></div>
            <button aria-label="Scroll right" className="flex w-[17px] justify-center"><ChevronRight className="h-[11px] w-[11px]" strokeWidth={4} /></button>
          </div>
        </div>
      </div>
      <div className="flex h-[29px] items-center pl-[6px]">
        <button className="h-[23px] w-[145px] border border-[#606060] bg-[#484848] pl-px text-left text-[11px] text-[#ff0]">Workspace: Default</button>
        <span className="ml-1 text-black"><Caret /></span>
        <span className="ml-2 h-6 border-l border-[#777]" />
        <span className="ml-[26px] self-start pt-1 text-[12px] leading-[10px] text-[#4b4b95]">»</span>
      </div>
    </aside>
  );
}

/* ---------- viewports ---------- */

const LINE = "#45b0ff";
const CAM = "#5078e0";
const YEL = "#ffff00";

function gridPath(w: number, h: number, x0: number, y0: number, step: number) {
  let d = "";
  for (let x = x0; x < w; x += step) d += `M${Math.round(x) + 0.5} 0V${h}`;
  for (let y = y0; y < h; y += step) d += `M0 ${Math.round(y) + 0.5}H${w}`;
  return d;
}

/** Camera gizmo seen from above, lens pointing up. */
function CameraTop({ x, y, turn = 0, s = 1 }: { x: number; y: number; turn?: number; s?: number }) {
  return (
    <g transform={`translate(${x} ${y}) rotate(${turn}) scale(${s})`} stroke={CAM} fill="none">
      <path d="M-15 4h30v12h-30zM-12 4v12M12 4v12M-15 13h30" />
      <path d="M-6 -12h12M-5 -12v8l-2 8M5 -12v8l2 8M-7 -3h14M-6 0h12M-2 -12v16M2 -12v16" />
    </g>
  );
}

/** Camera gizmo seen from the lens side. */
function CameraFace({ x, y, turn = 0, lens = [0, 0] }: { x: number; y: number; turn?: number; lens?: number[] }) {
  return (
    <g transform={`translate(${x} ${y}) rotate(${turn})`} stroke={CAM} fill="none">
      <rect x="-15" y="-10" width="30" height="20" rx="2" />
      <rect x="-11" y="-8" width="23" height="14" />
      <ellipse cx={lens[0]} cy={lens[1]} rx="7" ry="7" />
      <ellipse cx={lens[0]} cy={lens[1]} rx="5" ry="5" />
      <ellipse cx={lens[0] - 1} cy={lens[1] + 1} rx="3" ry="4" />
    </g>
  );
}

function Target({ x, y, color, h = 13 }: { x: number; y: number; color: string; h?: number }) {
  return <rect x={x} y={y} width="13" height={h} stroke={color} />;
}

function AxisTripod({ up, right, origin, left = false }: { up: string; right: string; origin: string; left?: boolean }) {
  const color: Record<string, string> = { x: "#c00000", y: "#00a000", z: "#0000c8" };
  return (
    <g fontSize="10">
      <path d="M25.500 580v-25" stroke={color[up]} />
      <path d={left ? "M25.500 580h-24" : "M25.500 580h26"} stroke={color[right]} />
      <text x="26" y="553" fill={color[up]}>{up}</text>
      <text x={left ? 1 : 50} y="577" fill={color[right]}>{right}</text>
      <text x="26" y="577" fill={color[origin]}>{origin}</text>
    </g>
  );
}

function ViewCube({ face }: { face: string }) {
  return (
    <g textAnchor="middle">
      {face === "TOP" ? (
        <>
          <circle cx="878" cy="55" r="29" stroke="#7d848b" strokeWidth="7" />
          <g fontSize="12" fontWeight="bold" fill="#a0a4a8">
            <text x="878" y="27">N</text>
            <text x="878" y="93">S</text>
            <text x="845" y="60">W</text>
            <text x="911" y="60">E</text>
          </g>
        </>
      ) : (
        <ellipse cx="878" cy="72" rx="36" ry="2.500" stroke="#85898d" strokeWidth="1.500" />
      )}
      <rect x="863" y="40" width="31" height="31" fill="#8c8c8c" stroke="#a0a0a0" />
      <rect x="867" y="44" width="23" height="22" fill="#80848a" />
      <text x="878" y="59" fontSize="8" fontWeight="bold" fill="#5c6066">{face}</text>
    </g>
  );
}

function Viewport({ label, active = false, plate = false, children }: { label: string[]; active?: boolean; plate?: boolean; children: ReactNode }) {
  return (
    <section aria-label={label[1]} className={active ? "relative overflow-hidden bg-[#393939] outline-2 -outline-offset-1 outline-[#7d6a1e]" : "relative overflow-hidden bg-[#393939] outline-1 outline-[#2c2c2c]"}>
      <svg viewBox="0 0 934 606" preserveAspectRatio="xMidYMid slice" fill="none" className="absolute inset-0 h-full w-full">
        {children}
      </svg>
      {/* the camera plate hides the end of its label */}
      <div className={plate ? "absolute top-1 left-[5px] flex w-40 gap-1 overflow-hidden text-[11px] leading-4 whitespace-nowrap text-[#ddd]" : "absolute top-1 left-[5px] flex gap-[6px] text-[11px] leading-4 text-[#ddd]"}>
        {label.map((l) => <button key={l} className="shrink-0">[{l}]</button>)}
      </div>
    </section>
  );
}

function TopView() {
  return (
    <Viewport label={["+", "Top", "Wireframe"]}>
      <g shapeRendering="crispEdges">
        <path d={gridPath(934, 606, 17.6, 31.6, 33.73)} stroke="#545454" />
        <path d="M489.500 0v606" stroke="#000" />
        <path d="M155.500 48.500h675v514h-18v-514M155.500 48.500v352h675M155.500 65.500h675" stroke="#787878" />
      </g>
      <g stroke={LINE}>
        <path d="M111.500 259l244-116 59-29.500M357 143l70-9.500M427.500 133v253M431 136l81 166M431 136l60 95" />
      </g>
      <Target x={408} y={106} color="#787878" />
      <Target x={432} y={125} color="#787878" />
      <Target x={425} y={135} color={CAM} />
      <rect x="420" y="121" width="15" height="13" stroke={CAM} />
      <g stroke={YEL}>
        <rect x="410.500" y="124.500" width="34" height="7" />
        <ellipse cx="427" cy="126" rx="10" ry="8" />
        <ellipse cx="357" cy="143.500" rx="4.500" ry="7" />
        <ellipse cx="111" cy="259" rx="2" ry="3.500" transform="rotate(-25 111 259)" />
      </g>
      <CameraTop x={427} y={382} />
      <CameraTop x={492} y={240} turn={-31} />
      <CameraTop x={516} y={314} turn={-24} />
      <ViewCube face="TOP" />
      <AxisTripod up="y" right="x" origin="z" />
    </Viewport>
  );
}

function FrontView() {
  return (
    <Viewport label={["+", "Front", "Wireframe"]}>
      <g shapeRendering="crispEdges">
        <path d={gridPath(934, 606, 8.3, 24.4, 37.1)} stroke="#545454" />
        <path d="M490.500 0v606M0 395.500h121M865 395.500h69" stroke="#000" />
        <path d="M121.500 209.500h743v186h-743zM845.500 209.500v186" stroke="#808080" />
      </g>
      <path d="M74 243.500l334 146M344 313l91 77.500M421 377.500l95-93M428 378.500l70-8M421.500 354v24" stroke={LINE} />
      <Target x={401} y={383} color="#787878" />
      <Target x={428} y={383} color="#787878" />
      <Target x={414} y={366} h={18} color={CAM} />
      <Target x={420} y={372} color={CAM} />
      <g stroke={YEL}>
        <ellipse cx="421" cy="318" rx="11.500" ry="8" />
        <path d="M403 334.500h37M339.500 318.500l9-10.500M341 318.500l7-9" />
        <ellipse cx="73.500" cy="243.500" rx="2" ry="3.500" />
      </g>
      <CameraFace x={421} y={352} />
      <CameraFace x={524} y={275} turn={6} lens={[-5, 5]} />
      <CameraFace x={498} y={371} lens={[-6, 0]} />
      <ViewCube face="FRONT" />
      <AxisTripod up="z" right="x" origin="y" />
    </Viewport>
  );
}

function LeftView() {
  return (
    <Viewport label={["+", "Left", "Wireframe"]} active>
      <g shapeRendering="crispEdges">
        <path d={gridPath(934, 606, 2, 2, 5.22)} stroke="#626262" />
        <path d="M0 432.500h70M864 432.500h70" stroke="#000" />
        <path d="M70 172.500h794v260h-794z" stroke="#828282" />
      </g>
      <path d="M396 220l-225 205M470 274.500l-267 126M589 373l-386 27M371 398.500l-158 11M217 317.500l-17 104" stroke={LINE} />
      <Target x={165} y={418} color="#787878" />
      <Target x={192} y={418} color="#787878" />
      <Target x={188} y={394} h={20} color={CAM} />
      <Target x={206} y={403} color={CAM} />
      <g stroke={YEL}>
        <circle cx="396" cy="220" r="5" />
        <ellipse cx="217" cy="317.500" rx="10.500" ry="8" />
        <path d="M179 313.500l21 21M189 348.500h10" />
      </g>
      <CameraTop x={478} y={268} turn={-104} s={0.8} />
      <CameraFace x={485} y={266} turn={-14} lens={[-5, 3]} />
      <CameraTop x={587} y={372} turn={-86} s={0.7} />
      <CameraTop x={588} y={372} turn={-86} s={0.8} />
      <CameraTop x={369} y={399} turn={-90} s={0.8} />
      <CameraFace x={372} y={398} lens={[-7, 0]} />
      <ViewCube face="LEFT" />
      <AxisTripod up="z" right="y" origin="x" left />
    </Viewport>
  );
}

function CameraView() {
  return (
    <Viewport label={["+", "CoronaCamera001", "Shaded"]} plate>
      <rect x="165" y="2" width="605" height="604" fill="#cacaca" />
      <rect x="165" y="435" width="605" height="171" fill="#969696" />
      <path d="M334 66h267l-2 3h-263z" fill="#fff" />
      <path d="M166 131l395 329M770 110l-314 257M166 364.500l210 77.500M504 389.500l266 10.500" stroke={LINE} />
      <Target x={450} y={360} color={CAM} h={14} />
      <Target x={498} y={382} color={CAM} h={14} />
      <Target x={370} y={435} color="#6c6c6c" h={14} />
      <Target x={556} y={454} color="#6c6c6c" h={14} />
      <rect x="165.500" y="2.500" width="604" height="602" stroke="#c0c000" strokeWidth="1.500" />
      <AxisTripod up="z" right="x" origin="y" />
    </Viewport>
  );
}

/* ---------- timeline ---------- */

const frames = Array.from({ length: 101 }, (_, i) => i);

function Timeline() {
  return (
    <div className="text-[11px] text-[#c8c8c8]">
      <div className="flex h-[17px] border-b border-[#444]">
        <button className="w-4 border-r border-b border-black leading-[14px]">&lt;</button>
        <button className="w-[126px] border-r-2 border-b-2 border-black leading-[14px]">0 / 100</button>
        <button className="w-4 border-r border-b border-black leading-[14px]">&gt;</button>
      </div>
      <div className="flex h-[26px]">
        <button aria-label="Open mini curve editor" className="flex w-[49px] shrink-0 items-center justify-center border-t border-black pr-1">
          <Icon className="h-[18px] w-[18px]"><path d="M1 1h22v6H1zM1 20h22v3H1zM3 5q4-4 9 0t9-2M7 18v-8m-3 3l3-3 3 3M17 10v8m-3-3l3 3 3-3" stroke="#ccc" strokeWidth="1.500" /></Icon>
        </button>
        <ol className="flex min-w-0 flex-1 border-t-2 border-black bg-[#2b2b2b]">
          {frames.map((f) => (
            <li key={f} className="relative flex min-w-0 flex-1 flex-col items-center">
              {f === 0 && <span className="absolute inset-y-0 w-[7px] bg-[#8a7f20]" />}
              <span className={f % 5 === 0 ? "h-3 w-px shrink-0 bg-[#707070]" : "h-[11px] w-px shrink-0 bg-[#606060]"} />
              {f % 5 === 0 && <span className="relative text-[11px] leading-[11px] text-[#bbb]">{f}</span>}
            </li>
          ))}
        </ol>
        <div className="w-[49px] shrink-0 border-t-2 border-black" />
      </div>
    </div>
  );
}

/* ---------- command panel ---------- */

const primitives = ["Box", "Cone", "Sphere", "GeoSphere", "Cylinder", "Tube", "Torus", "Pyramid", "Teapot", "Plane", "TextPlus", "tyFlow"];

const panelTabs: { name: string; art: ReactNode }[] = [
  { name: "Create", art: <><path d="M12 3l2 6 6-3-3 6 3 6-6-3-2 6-2-6-6 3 3-6-3-6 6 3z" fill="#f08a20" /><circle cx="12" cy="12" r="3.500" fill="#ffe680" /></> },
  { name: "Modify", art: <><path d="M4 22Q5 7 21 4" stroke="#3f93e0" strokeWidth="6" /><path d="M3 21Q4 6 20 3" stroke="#d7ecff" strokeWidth="1.500" /><path d="M3 22V2h19M20 20h3v3" stroke="#ddd" /></> },
  { name: "Hierarchy", art: <><rect x="7" y="1" width="11" height="9" fill="#b9bfc7" /><path d="M12 10v8M12 12l-8 6M12 12l8 6" stroke="#ccc" /><rect x="1" y="17" width="6" height="6" fill="#ccc" /><rect x="9" y="17" width="6" height="6" fill="#ccc" /><rect x="17" y="17" width="6" height="6" fill="#ccc" /></> },
  { name: "Motion", art: <><circle cx="14" cy="12" r="8" stroke="#ccc" strokeWidth="2" /><circle cx="14" cy="12" r="4" stroke="#ccc" strokeWidth="2" /><circle cx="14" cy="12" r="1" fill="#eee" /><path d="M5 5q-3 7 0 14M2 7q-2 5 0 10" stroke="#888" /></> },
  { name: "Display", art: <><rect x="1" y="2" width="22" height="16" fill="#dfe2e6" /><path d="M8 7l2-2h6v6l-2 3H8z" stroke="#333" strokeWidth="1.500" /><path d="M8 20h8" stroke="#bbb" strokeWidth="3" /></> },
  { name: "Utilities", art: <><path d="M3 22L15 8" stroke="#c24a44" strokeWidth="3.500" /><path d="M8 5l5-3q7 1 9 8l-3-1-4 2z" fill="#a8adb3" /></> },
];

const categories: { name: string; art: ReactNode }[] = [
  { name: "Geometry", art: <Sphere /> },
  { name: "Shapes", art: <Shapes /> },
  { name: "Lights", art: <Lamp /> },
  { name: "Cameras", art: <CameraSmall /> },
  { name: "Helpers", art: <Tape /> },
  { name: "Space warps", art: <Waves /> },
  { name: "Systems", art: <Gears /> },
];

function Rollout({ title, children }: { title: string; children: ReactNode }) {
  return (
    <section className="ml-2 w-[165px]">
      <h2 className="relative z-10 mx-[3px] flex h-4 items-center border border-[#707070] bg-[#444] text-[11px] text-[#eee]">
        <span className="w-3 text-center">-</span>
        <span className="flex-1 pr-3 text-center">{title}</span>
      </h2>
      <div className="-mt-2 border border-black pt-2">{children}</div>
    </section>
  );
}

function CommandPanel() {
  return (
    <aside className="flex w-[368px] shrink-0 flex-col border-b border-black bg-[#444] text-[11px] text-[#ccc]">
      <div className="flex h-[29px] items-end border-b border-black pl-[2px]">
        {panelTabs.map((t) => (
          <button key={t.name} aria-label={t.name} className="flex h-[25px] w-[29px] items-center justify-center rounded-t-[3px] border border-b-0 border-black bg-[#333] first:bg-[#444]">
            <Icon className="h-[18px] w-[18px]">{t.art}</Icon>
          </button>
        ))}
      </div>
      <div className="flex min-h-0 flex-1">
        <div className="w-[178px] shrink-0 border-r border-[#3a3a3a]">
          <div className="flex h-9 items-center gap-1 pl-[13px]">
            {categories.map((c) => (
              <button key={c.name} aria-label={c.name} className="h-5 w-5 p-px first:bg-[#3a7edb]">{c.art}</button>
            ))}
          </div>
          <Select label="Object category" value="Standard Primitives" className="ml-3 w-[162px]" />
          <div className="mt-2 mb-[5px] ml-1 border-t border-black" />
          <Rollout title="Object Type">
            <label className="flex h-5 items-center gap-[10px] pl-[34px] text-[#1c1c1c]">
              <input type="checkbox" className="h-3 w-3 appearance-none border-t-2 border-l-2 border-black bg-[#484848]" />
              AutoGrid
            </label>
            <div className="grid grid-cols-2 gap-x-2 gap-y-[3px] px-2 pb-[3px]">
              {primitives.map((p) => (
                <button key={p} className="h-[18px] border-t border-r border-b border-l border-t-[#4e4e4e] border-r-black border-b-black border-l-[#4e4e4e] leading-4">{p}</button>
              ))}
            </div>
          </Rollout>
          <div className="mt-2">
            <Rollout title="Name and Color">
              <div className="flex h-8 items-center gap-[5px] pl-2">
                <input aria-label="Object name" className="h-5 w-[131px] border-t-2 border-l-2 border-black bg-[#575757]" />
                <button aria-label="Object color" className="h-[19px] w-4 bg-[#c5307f]" />
              </div>
            </Rollout>
          </div>
        </div>
        <div className="mt-px mr-[6px] mb-1 ml-[9px] flex-1 border border-black border-r-[#383838]" />
      </div>
    </aside>
  );
}

/* ---------- status bar ---------- */

const transport = ["M3 3v18M21 3l-8 9 8 9zM12 3l-8 9 8 9z", "M9 3L1 12l8 9zM13 3v18M18 3v18", "M6 3l12 9-12 9z", "M15 3l8 9-8 9zM11 3v18M6 3v18", "M21 3v18M3 3l8 9-8 9zM12 3l8 9-8 9z"];

const navIcons: { name: string; art: ReactNode }[] = [
  { name: "Zoom", art: <><circle cx="8" cy="9" r="7" fill="#bfc5cc" /><path d="M13 14l5 7M17 4h6M20 1v6" stroke="#eee" strokeWidth="2.500" /></> },
  { name: "Zoom all", art: <path d="M1 1h9v9H1zM12 1h9v9h-9zM1 12h9v9H1zM12 12h7l4 9h-11z" fill="#d3d9df" /> },
  { name: "Zoom extents", art: <><path d="M1 6V1h5M18 1h5v5M1 18v5h5" stroke="#ddd" strokeWidth="2" /><path d="M6 8l3-3h9v10l-3 4H6z" fill="#62b152" /><Corner /></> },
  { name: "Zoom extents all", art: <><path d="M9 1h14v14H9z" fill="#d8d8d8" /><path d="M1 10l3-2h10v11l-3 3H1z" fill="#62b152" /><Corner /></> },
  { name: "Zoom region", art: <><rect x="1" y="1" width="16" height="14" stroke="#ddd" strokeWidth="2" strokeDasharray="3 2" /><circle cx="18" cy="17" r="4" fill="#ddd" /></> },
  { name: "Pan", art: <><path d="M6 12L2 9l1 7 6 7h9l3-12-3 1V5l-3 6V2l-3 8-2-8-1 9-3-7z" fill="#e6e6e6" /><Corner /></> },
  { name: "Orbit", art: <><path d="M12 2l9 14-9 5-8-6z" stroke="#ddd" strokeWidth="2" /><circle cx="13" cy="12" r="5" fill="#62b152" /><Corner /></> },
  { name: "Maximize viewport", art: <><rect x="2" y="2" width="20" height="20" fill="#e3e3e3" /><path d="M18 18L7 7m0 7V7h7" stroke="#222" strokeWidth="2.500" /></> },
];

function StatusBar() {
  return (
    <footer className="flex h-[50px] shrink-0 bg-[#444] text-[11px] text-[#ccc]">
      <div className="flex w-[105px] shrink-0 flex-col gap-[2px] border-r border-black p-[2px] pr-[6px]">
        <div className="h-[22px] border-t border-r-2 border-b-2 border-l border-t-[#888] border-r-white border-b-white border-l-[#888] bg-[#d9c2c4]" />
        <input aria-label="Listener" defaultValue="State Sets E:" className="h-[22px] w-full border border-[#888] bg-white px-1 font-['Liberation_Mono',monospace] text-[11px] text-black" />
      </div>
      <div className="flex min-w-0 flex-1 flex-col gap-1 pt-[3px] pl-[2px]">
        <div className="flex h-[21px]">
          <p className="flex-1 border-t-2 border-r border-l-2 border-black px-1 leading-[19px]">None Selected</p>
          <div className="flex items-center text-[#ccc]">
            <button aria-label="Isolate selection" className="flex w-[27px] justify-center"><Icon className="h-4 w-4"><path d="M12 1a6 6 0 0 1 6 7q0 5-4 7v6l-2 2-2-2v-6q-4-2-4-7a6 6 0 0 1 6-7z" fill="#a8a8a8" /></Icon></button>
            <button aria-label="Selection lock" className="flex w-[27px] justify-center"><Lock className="h-[14px] w-[14px] fill-[#777]" /></button>
            <button aria-label="Absolute mode" className="flex w-[27px] justify-center"><Icon className="h-4 w-4"><rect x="2" y="2" width="20" height="20" fill="#e3e3e3" /><circle cx="12" cy="12" r="5" stroke="#222" strokeWidth="2" /><path d="M12 2v4m0 12v4M2 12h4m12 0h4" stroke="#222" strokeWidth="2" /></Icon></button>
            {["X", "Y", "Z"].map((a) => (
              <label key={a} className="flex w-[82px] items-center gap-[2px]">
                <span className="w-3 text-right">{a}:</span>
                <input className="h-5 w-[56px] border-t-2 border-l-2 border-black bg-[#585858]" />
              </label>
            ))}
          </div>
        </div>
        <div className="flex h-[21px]">
          <p className="flex-1 border-t-2 border-r border-l-2 border-black px-1 leading-[19px]">Click or click-and-drag to select objects</p>
          <button aria-label="Time tag" className="mx-1 w-5">
            <Icon className="h-4 w-4"><path d="M4 6l4-4h12v15l-4 4H4z" fill="#eee" /><path d="M9 7h8v10H9z" fill="#eee" stroke="#333" /></Icon>
          </button>
        </div>
      </div>
      <div className="flex w-[99px] shrink-0 flex-col gap-1 pt-[3px]">
        <p className="h-[21px] border-t-2 border-l border-black pl-1 leading-[19px]">Grid = 10,0cm</p>
        <button className="h-[21px] border-t-2 border-l border-black pl-1 text-left leading-[19px]">Add Time Tag</button>
      </div>
      <button aria-label="Set keys" className="mt-[3px] ml-[5px] flex h-[44px] w-[43px] shrink-0 items-center justify-center border border-black">
        <Icon><circle cx="5" cy="12" r="3.500" stroke="#000" strokeWidth="2" /><path d="M9 12h14M17 12v5M21 12v5" stroke="#000" strokeWidth="2.500" /></Icon>
      </button>
      <div className="mt-[3px] ml-1 grid w-[166px] shrink-0 grid-cols-[48px_1fr] gap-x-1">
        <button className="h-[21px] border-r border-b border-black">Auto Key</button>
        <Select label="Key set" value="Selected" className="w-[114px]" />
        <button className="h-[22px] border-r border-b border-black">Set Key</button>
        <div className="flex items-center justify-between">
          <button aria-label="Tangent type"><Icon className="h-5 w-5"><path d="M3 22q3 0 5-10t4-9 4 9q2 5 5 2" stroke="#d06a60" strokeWidth="2" /><path d="M3 22q3 0 5-10" stroke="#7aa0e0" strokeWidth="2" /><Corner /></Icon></button>
          <button className="h-[21px] w-[88px] border border-[#2a2a2a]">Key Filters...</button>
        </div>
      </div>
      <div className="mx-2 w-[117px] shrink-0 pt-[3px]">
        <div className="flex h-[22px] items-center justify-between">
          {transport.map((d) => (
            <button key={d} aria-label="Transport"><Icon className="h-[17px] w-[17px]"><path d={d} fill="#999" stroke="#e0e0e0" strokeWidth="1.500" /></Icon></button>
          ))}
        </div>
        <div className="flex h-[22px] items-center justify-between">
          <button aria-label="Key mode"><Icon className="h-4 w-4"><path d="M2 4v16M22 4v16M10 6l-6 6 6 6zM14 6l6 6-6 6z" fill="#999" stroke="#e0e0e0" strokeWidth="1.500" /></Icon></button>
          <input aria-label="Current frame" defaultValue="0" className="h-5 w-[60px] border-t-2 border-l-2 border-black bg-[#585858] px-1 text-[11px]" />
          <span className="flex flex-col text-[7px] leading-2"><span>▲</span><span>▼</span></span>
          <button aria-label="Time configuration"><Icon className="h-4 w-4"><rect x="2" y="1" width="13" height="21" fill="#dce7f3" /><path d="M4 4h9v4H4zM4 11h9" fill="#2a62a8" stroke="#2a62a8" /><circle cx="16" cy="17" r="6" fill="#eee" stroke="#555" /><path d="M16 13v4h3" stroke="#333" /></Icon></button>
        </div>
      </div>
      <div className="mr-[2px] grid shrink-0 grid-cols-[repeat(4,23px)] grid-rows-[22px_22px] items-center justify-items-center pt-[3px]">
        {navIcons.map((n) => (
          <button key={n.name} aria-label={n.name}><Icon className="h-[17px] w-[17px]">{n.art}</Icon></button>
        ))}
      </div>
    </footer>
  );
}

export default function App() {
  return (
    <div className="flex min-h-screen flex-col bg-[#444] font-['Noto_Sans','Open_Sans',sans-serif]">
      <Header />
      <Toolbar />
      <Ribbon />
      <main className="flex flex-1">
        <div className="flex w-10 shrink-0 flex-col border-r border-[#222] bg-[#333]">
          <div className="mx-1 mt-1 h-1 border-y border-black" />
          <div className="mt-auto flex flex-col items-center gap-[11px]">
            <button aria-label="Expand layouts" className="h-5 w-5 rounded-[2px] bg-[#505050] text-[9px] leading-5 text-[#eee]">▶</button>
            <button aria-label="Viewport layout" className="mb-[2px] grid h-[43px] w-9 grid-cols-2 grid-rows-2 gap-[2px] self-end rounded-l bg-gradient-to-b from-[#4a6da3] to-[#3d80dc] px-[3px] py-2">
              {[0, 1, 2, 3].map((i) => <span key={i} className="border border-[#2d3a4d] bg-[#61708a]" />)}
            </button>
          </div>
        </div>
        <SceneExplorer />
        <div className="flex min-w-0 flex-1 flex-col">
          <div className="grid flex-1 grid-cols-2 grid-rows-2 gap-[6px] px-[2px] pt-[2px] pb-1">
            <TopView />
            <FrontView />
            <LeftView />
            <CameraView />
          </div>
          <Timeline />
        </div>
        <CommandPanel />
      </main>
      <StatusBar />
    </div>
  );
}
